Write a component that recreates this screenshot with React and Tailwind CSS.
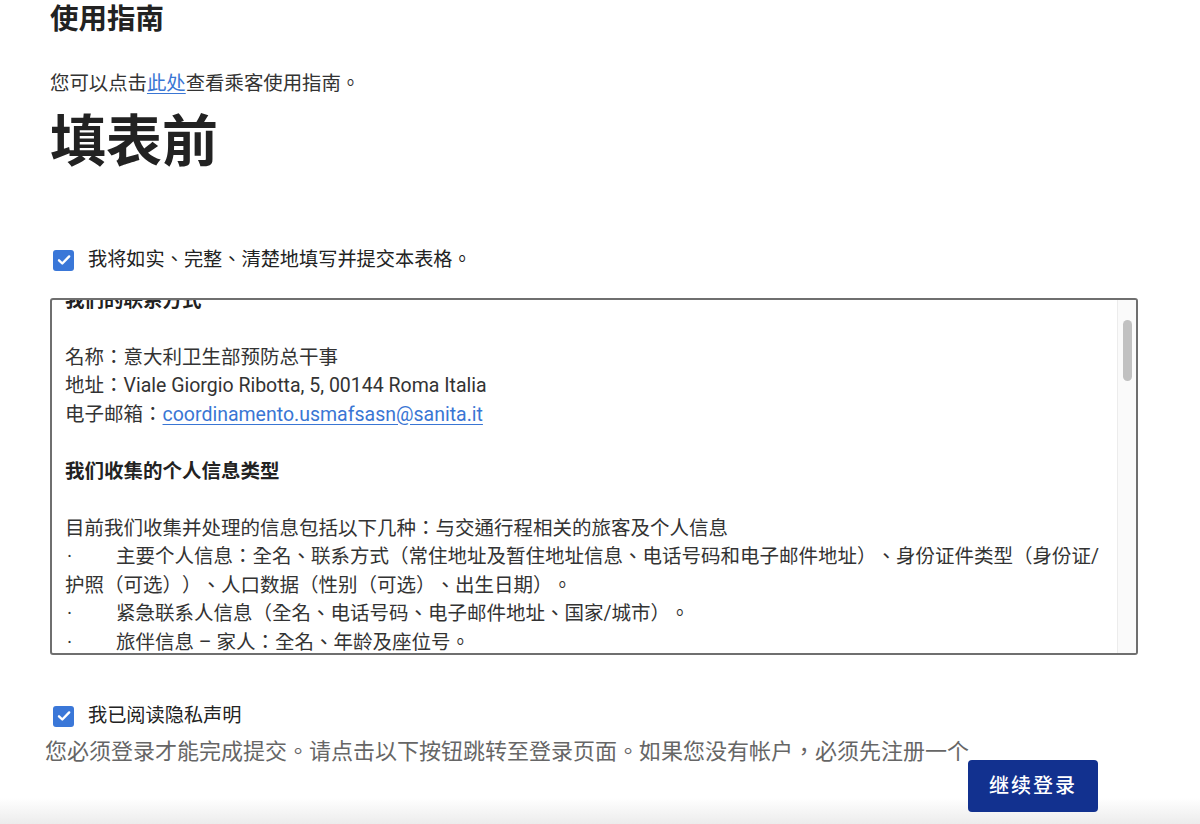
import React, { useEffect, useRef } from 'react';

const FONT = 'font-["Roboto","Noto_Sans_CJK_TC",sans-serif] [text-spacing-trim:space-all]';

const Check = () => (
  <span className="flex items-center justify-center w-[21px] h-[21px] rounded-[3px] bg-[#3a77d8] shrink-0">
    <svg width="16" height="16" viewBox="0 0 16 16" fill="none">
      <path d="M3 8.3l3.3 3.2L13.2 4.4" stroke="white" strokeWidth="2.4" strokeLinecap="round" strokeLinejoin="round" />
    </svg>
  </span>
);

const Bullet = ({ children }) => (
  <div>
    <span className="inline-block w-[51px] pl-[2px]">·</span>
    {children}
  </div>
);

const Blank = () => <div className="h-[28.5px]" />;

const moreParagraphs = [
  '我们如何使用您的个人信息',
  '',
  '我们收集的信息仅用于公共卫生目的，包括在发生传染病或其他健康风险时追踪和联系旅客，以便及时采取预防和控制措施。',
  '',
  '信息的法律依据',
  '',
  '个人信息的处理依据为欧盟第2016/679号条例（通用数据保护条例）第6条第1款(e)项以及第9条第2款(i)项，即出于公共利益和公共卫生领域的必要性。',
  '',
  '信息的接收方',
  '',
  '您的个人信息可能会被传达给负责公共卫生事务的国家及地区主管部门、边境卫生机构以及其他依法有权获取该信息的公共机构。除法律规定的情形外，我们不会将您的个人信息提供给任何第三方。',
  '',
  '信息的保存期限',
  '',
  '您的个人信息将在实现上述目的所需的期限内予以保存，最长不超过自您入境之日起十四天，法律另有规定的除外。期满后，相关信息将被安全删除或匿名化处理。',
  '',
  '信息的安全',
  '',
  '我们采取适当的技术和组织措施保护您的个人信息，防止其遭到未经授权的访问、泄露、篡改或丢失。只有经过授权的人员才能访问相关信息，且仅限于履行其职责所必需的范围。',
  '',
  '您的权利',
  '',
  '根据适用的数据保护法律，您有权访问、更正、删除您的个人信息，有权限制或反对对您个人信息的处理，并有权向意大利个人数据保护监管机构（Garante per la protezione dei dati personali）提出投诉。',
  '',
  '如需行使上述权利，请通过上述电子邮箱与我们联系。',
  '',
  '本声明的更新',
  '',
  '我们可能会不时更新本隐私声明。更新后的版本将在本网站上公布，并自公布之日起生效。',
];

const boldSet = new Set([
  '我们如何使用您的个人信息',
  '信息的法律依据',
  '信息的接收方',
  '信息的保存期限',
  '信息的安全',
  '您的权利',
  '本声明的更新',
]);

export default function App() {
  const boxRef = useRef(null);

  useEffect(() => {
    if (boxRef.current) boxRef.current.scrollTop = 113;
  }, []);

  return (
    <div className={`min-h-[824px] bg-white text-[#222] ${FONT} relative`}>
      <div className="pl-[50px] pr-[62px] relative z-10">
        <h2 className="text-[28.5px] leading-[40px] font-semibold text-[#222]">使用指南</h2>
        <p className="mt-[30px] text-[19.4px] leading-[28px] text-[#333]">
          您可以点击
          <a href="#" className="text-[#3a76d4] underline underline-offset-[3px]">此处</a>
          查看乘客使用指南。
        </p>
        <h1 className="mt-[12px] text-[56px] leading-[64px] font-bold text-[#222]">填表前</h1>

        <label className="mt-[72px] flex items-center gap-[14px] pl-[3px] h-[28px] text-[19.2px] text-[#222]">
          <Check />
          <span>我将如实、完整、清楚地填写并提交本表格。</span>
        </label>

        <div className="mt-[24px] relative h-[357px] border-2 border-[#6f6f6f] rounded-[3px] overflow-hidden">
          <div
            ref={boxRef}
            className="h-full overflow-y-scroll pr-[19px] text-[19.5px] leading-[28.5px] text-[#333] [scrollbar-width:none]"
          >
            <div className="pl-[13px] py-[14px]">
              <div className="font-bold text-[#222]">隐私声明</div>
              <Blank />
              <div>本声明说明我们如何收集、使用和保护您在填写本表格时提供的个人信息。</div>
              <div className="font-bold text-[#222]">我们的联系方式</div>
              <Blank />
              <div>名称：意大利卫生部预防总干事</div>
              <div>地址：Viale Giorgio Ribotta, 5, 00144 Roma Italia</div>
              <div>
                电子邮箱：
                <a href="#" className="text-[#3a76d4] underline underline-offset-[3px]">coordinamento.usmafsasn@sanita.it</a>
              </div>
              <Blank />
              <div className="font-bold text-[#222]">我们收集的个人信息类型</div>
              <Blank />
              <div>目前我们收集并处理的信息包括以下几种：与交通行程相关的旅客及个人信息</div>
              <Bullet>主要个人信息：全名、联系方式（常住地址及暂住地址信息、电话号码和电子邮件地址）、身份证件类型（身份证/</Bullet>
              <div>护照（可选））、人口数据（性别（可选）、出生日期）。</div>
              <Bullet>紧急联系人信息（全名、电话号码、电子邮件地址、国家/城市）。</Bullet>
              <Bullet>旅伴信息 – 家人：全名、年龄及座位号。</Bullet>
              <Bullet>旅伴信息 – 非家人：全名及座位号。</Bullet>
              <Bullet>行程信息：航空公司或船运公司、航班号或船次、座位号、出发日期、出发国家及城市、到达日期。</Bullet>
              <Bullet>健康信息：过去十四天内的旅行史以及是否出现相关症状。</Bullet>
              <Blank />
              {moreParagraphs.map((t, i) =>
                t === '' ? (
                  <Blank key={i} />
                ) : (
                  <div key={i} className={boldSet.has(t) ? 'font-bold text-[#222]' : ''}>
                    {t}
                  </div>
                )
              )}
            </div>
          </div>
          {/* scrollbar track */}
          <div className="absolute top-0 bottom-0 right-0 w-[19px] bg-[#fafafa] border-l border-[#ececec] flex justify-center">
            <div className="mt-[20px] w-[9px] h-[61px] rounded-full bg-[#c1c1c1]" />
          </div>
        </div>

        <label className="mt-[47px] flex items-center gap-[14px] pl-[3px] h-[28px] text-[19.2px] text-[#222]">
          <Check />
          <span>我已阅读隐私声明</span>
        </label>

        <p className="mt-[7px] -ml-[5px] text-[22px] leading-[30px] text-[#666]">
          您必须登录才能完成提交。请点击以下按钮跳转至登录页面。如果您没有帐户，必须先注册一个
        </p>

        <div className="flex justify-end pr-[40px] -mt-[7px]">
          <button
            type="button"
            className="w-[130px] h-[52px] rounded-[4px] bg-[#12318f] text-white text-[20px] tracking-[2px] font-medium"
          >
            继续登录
          </button>
        </div>
      </div>
      <div className="absolute left-0 right-0 bottom-0 h-[26px] bg-gradient-to-b from-white to-[#ececec] z-0" />
    </div>
  );
}
